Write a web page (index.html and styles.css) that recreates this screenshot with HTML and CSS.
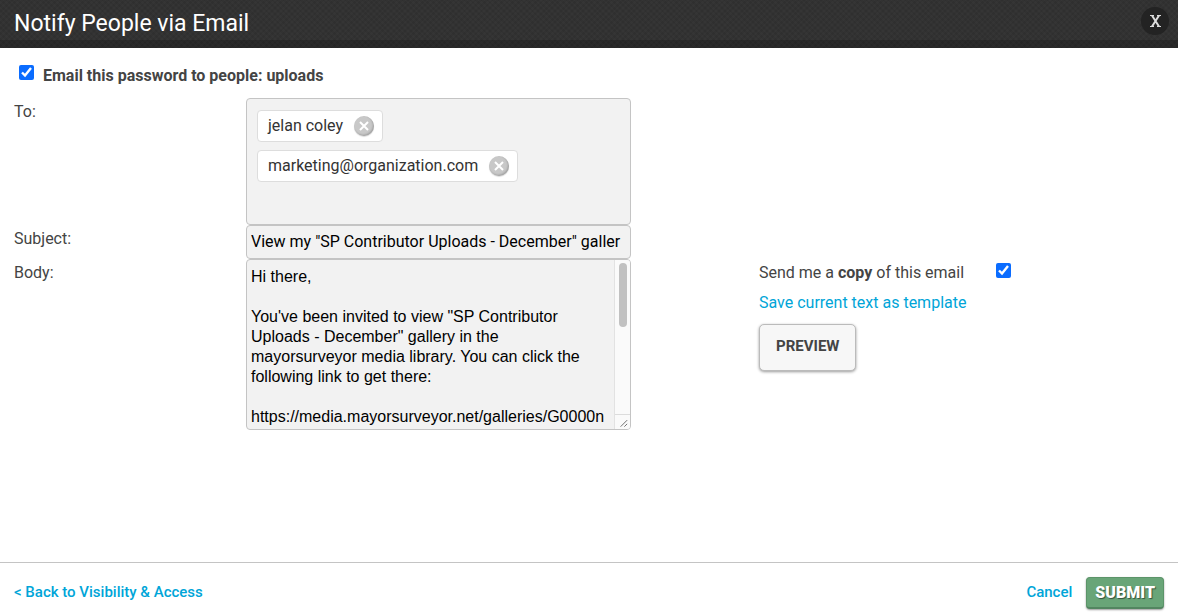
FILE: index.html
```html
<!DOCTYPE html>
<html lang="en">
<head>
  <meta charset="UTF-8">
  <meta name="viewport" content="width=device-width, initial-scale=1.0">
  <title>Notify People via Email</title>
  <link rel="stylesheet" href="styles.css">
</head>
<body>
  <form class="dialog">
    <header class="dialog-header">
      <h1>Notify People via Email</h1>
      <button type="button" class="close" aria-label="Close">
        <svg width="13" height="14" viewBox="0 0 13 14"><path class="serif" d="M1 1.500h4M8 1.500h4M1 12.500h4M8 12.500h4"/><path d="M3 1.500l7 11M10 1.500l-7 11"/></svg>
      </button>
    </header>

    <main class="dialog-body">
      <label class="notify">
        <input type="checkbox" checked>
        <span>Email this password to people: uploads</span>
      </label>

      <div class="fields">
        <label for="to">To:</label>
        <div class="recipients">
          <div class="chip">
            <span>jelan coley</span>
            <button type="button" class="remove" aria-label="Remove jelan coley">
              <svg width="20" height="20" viewBox="0 0 20 20"><path d="M6 6l8 8M14 6l-8 8"/></svg>
            </button>
          </div>
          <div class="chip">
            <span>marketing@organization.com</span>
            <button type="button" class="remove" aria-label="Remove marketing@organization.com">
              <svg width="20" height="20" viewBox="0 0 20 20"><path d="M6 6l8 8M14 6l-8 8"/></svg>
            </button>
          </div>
          <input type="text" id="to" class="recipient-input">
        </div>

        <label for="subject">Subject:</label>
        <input type="text" id="subject" class="subject" value="View my &quot;SP Contributor Uploads - December&quot; galler">

        <label for="body">Body:</label>
        <div class="message">
          <textarea id="body">Hi there,

You've been invited to view "SP Contributor Uploads - December" gallery in the mayorsurveyor media library. You can click the following link to get there:

https://media.mayorsurveyor.net/galleries/G0000n</textarea>
          <div class="scrollbar">
            <span class="thumb"></span>
            <svg class="grip" width="15" height="15" viewBox="0 0 15 15"><path d="M5.500 12.500l7-7M9.500 12.500l3-3"/></svg>
          </div>
        </div>

        <div class="options">
          <div class="copy">
            <label for="copy">Send me a <b>copy</b> of this email</label>
            <input type="checkbox" id="copy" checked>
          </div>
          <a href="#">Save current text as template</a>
          <button type="button" class="preview">PREVIEW</button>
        </div>
      </div>
    </main>

    <footer class="dialog-footer">
      <a href="#">&lt; Back to Visibility &amp; Access</a>
      <div class="actions">
        <a href="#">Cancel</a>
        <button type="submit" class="submit">SUBMIT</button>
      </div>
    </footer>
  </form>
</body>
</html>
```
FILE: styles.css
```css
:root {
  --text: #444;
  --link: #00a5d8;
  --field: #f2f2f2;
  --border: #c4c4c4;
}
* {
  box-sizing: border-box;
}
body {
  margin: 0;
  font-family: Roboto, sans-serif;
  font-size: 16px;
  line-height: 20px;
  color: var(--text);
  background: #fff;
}
a {
  color: var(--link);
  text-decoration: none;
}
button,
input,
textarea {
  font: inherit;
}
input[type=checkbox] {
  width: 15px;
  height: 15px;
  margin: 0;
  accent-color: #0a6cff;
}
.dialog {
  display: flex;
  flex-direction: column;
  min-height: 100vh;
}

/* header */
.dialog-header {
  display: flex;
  align-items: center;
  justify-content: space-between;
  height: 48px;
  padding: 2px 9px 0 14px;
  border-bottom: 8px solid rgba(0, 0, 0, 0.2);
  background-color: #353535;
  background-image:
    repeating-linear-gradient(45deg, rgba(0, 0, 0, 0.06) 0 2px, transparent 2px 4px),
    repeating-linear-gradient(-45deg, rgba(0, 0, 0, 0.06) 0 2px, transparent 2px 4px);
}
.dialog-header h1 {
  margin: 0;
  padding-top: 6px;
  font-size: 23px;
  font-weight: 400;
  line-height: 28px;
  color: #fff;
}
.close {
  display: flex;
  align-items: center;
  justify-content: center;
  width: 28px;
  height: 28px;
  padding: 0;
  border: 0;
  border-radius: 50%;
  background: #232323;
  cursor: pointer;
}
.close svg {
  fill: none;
  stroke: #ddd;
  stroke-width: 2;
}
.close .serif {
  stroke-width: 1;
}

/* form */
.dialog-body {
  flex: 1;
  padding: 16px 14px;
}
.notify {
  display: flex;
  gap: 9px;
  padding-left: 5px;
  margin-bottom: 12px;
  font-weight: 700;
}
.notify input {
  margin-top: 1px;
}
.notify span {
  padding-top: 2px;
}
.fields {
  display: grid;
  grid-template-columns: 232px minmax(0, 385px) minmax(0, 1fr);
}
.fields > label {
  grid-column: 1;
  padding-top: 4px;
}
.recipients,
.subject,
.message {
  grid-column: 2;
  width: 100%;
  border: 1px solid var(--border);
  border-radius: 4px;
  background: var(--field);
}
.recipients {
  display: flex;
  flex-direction: column;
  align-items: flex-start;
  gap: 8px;
  padding: 11px 10px 2px;
}
.chip {
  display: flex;
  align-items: center;
  gap: 11px;
  height: 32px;
  padding: 0 8px 1px 10px;
  border: 1px solid #ddd;
  border-radius: 4px;
  color: #333;
  background: #fff;
}
.remove {
  display: flex;
  padding: 0;
  border: 0;
  border-radius: 50%;
  background: #c8c8c8;
  box-shadow: inset -1px -1px 2px rgba(0, 0, 0, 0.2), 0 1px 1px rgba(0, 0, 0, 0.15);
  cursor: pointer;
}
.remove svg {
  fill: none;
  stroke: #fff;
  stroke-width: 2;
}
.recipient-input {
  width: 100%;
  height: 32px;
  padding: 0;
  border: 0;
  outline: 0;
  background: transparent;
}
.subject {
  height: 34px;
  padding: 0 4px 2px;
  color: #000;
}
.message {
  position: relative;
  height: 171px;
  overflow: hidden;
}
.message textarea {
  display: block;
  width: 100%;
  height: 100%;
  padding: 7px 24px 0 4px;
  border: 0;
  outline: 0;
  font-family: "Liberation Sans", Arial, sans-serif;
  color: #000;
  background: transparent;
  resize: none;
}
/* scrollbar lies over the right edge of the textarea */
.scrollbar {
  position: absolute;
  top: 0;
  right: 0;
  bottom: 0;
  display: flex;
  flex-direction: column;
  justify-content: space-between;
  width: 16px;
  border-left: 1px solid #e2e2e2;
  background: #fafafa;
}
.thumb {
  width: 8px;
  height: 64px;
  margin: 3px auto 0;
  border-radius: 4px;
  background: #c1c1c1;
}
.grip {
  border-top: 1px solid #dcdcdc;
  fill: none;
  stroke: #666;
}
.options {
  display: flex;
  flex-direction: column;
  align-items: flex-start;
  gap: 10px;
  padding: 4px 0 0 128px;
}
.copy {
  display: flex;
  gap: 32px;
}
.preview {
  height: 47px;
  padding: 0 16px 3px;
  margin-top: 1px;
  border: 1px solid #bbb;
  border-radius: 5px;
  font-size: 15px;
  font-weight: 700;
  color: var(--text);
  background: #f7f7f7;
  box-shadow: 0 1px 3px rgba(0, 0, 0, 0.4);
  cursor: pointer;
}

/* footer */
.dialog-footer {
  display: flex;
  align-items: center;
  justify-content: space-between;
  height: 54px;
  padding: 6px 14px 0;
  border-top: 1px solid var(--border);
  font-size: 15px;
  font-weight: 500;
}
.dialog-footer a {
  padding-bottom: 2px;
}
.actions {
  display: flex;
  align-items: center;
  gap: 14px;
}
.submit {
  height: 32px;
  padding: 1px 8px 0;
  border: 1px solid #5c9469;
  border-bottom: 2px solid #528560;
  border-radius: 4px;
  font-size: 16px;
  font-weight: 900;
  color: #fff;
  text-shadow: 1px 1px 1px rgba(0, 0, 0, 0.5);
  background: #69a578;
  box-shadow: 0 1px 2px rgba(0, 0, 0, 0.4);
  cursor: pointer;
}
```
